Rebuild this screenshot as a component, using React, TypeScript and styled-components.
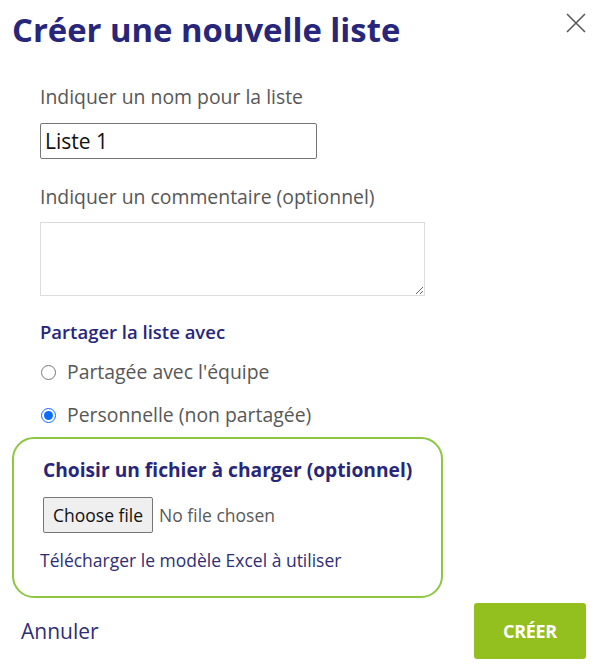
import { FC } from "react";
import styled, { createGlobalStyle } from "styled-components";

const GlobalStyle = createGlobalStyle`
  body {
    margin: 0;
    background: #ffffff;
    font-family: "Open Sans", "Noto Sans", sans-serif;
  }
`;

const navy = "#27267a";
const green = "#93c01f";

const App: FC = () => {
  return (
    <>
      <GlobalStyle />
      <Dialog>
        <Header>
          <Title>Créer une nouvelle liste</Title>
          <CloseButton aria-label="Fermer">
            <svg width="20" height="20" viewBox="0 0 20 20">
              <path
                d="M1 1 L19 19 M19 1 L1 19"
                stroke="#5a5a5a"
                strokeWidth="1.6"
                fill="none"
              />
            </svg>
          </CloseButton>
        </Header>

        <Form>
          <Label $top={36}>Indiquer un nom pour la liste</Label>
          <TextInput defaultValue="Liste 1" />

          <Label $top={26}>Indiquer un commentaire (optionnel)</Label>
          <TextArea />

          <SectionTitle>Partager la liste avec</SectionTitle>
          <RadioRow $top={16}>
            <Radio type="radio" name="share" />
            Partagée avec l'équipe
          </RadioRow>
          <RadioRow $top={19}>
            <Radio type="radio" name="share" defaultChecked />
            Personnelle (non partagée)
          </RadioRow>

          <UploadBox>
            <UploadTitle>Choisir un fichier à charger (optionnel)</UploadTitle>
            <FilePicker>
              <HiddenFile type="file" />
              <FileButton>Choose file</FileButton>
              <FileName>No file chosen</FileName>
            </FilePicker>
            <TemplateLink href="#">
              Télécharger le modèle Excel à utiliser
            </TemplateLink>
          </UploadBox>
        </Form>

        <Footer>
          <CancelLink href="#">Annuler</CancelLink>
          <CreateButton>Créer</CreateButton>
        </Footer>
      </Dialog>
    </>
  );
};

export default App;

const Dialog = styled.div`
  width: 596px;
  height: 669px;
  box-sizing: border-box;
`;

const Header = styled.div`
  display: flex;
  justify-content: space-between;
  align-items: flex-start;
  padding: 11px 10px 0 12px;
`;

const Title = styled.h1`
  margin: 0;
  font-size: 32.8px;
  line-height: 38px;
  font-weight: 700;
  color: ${navy};
`;

const CloseButton = styled.button`
  border: none;
  background: none;
  padding: 0;
  margin-top: 2px;
  width: 20px;
  height: 20px;
  display: flex;
  cursor: pointer;
`;

const Form = styled.div`
  display: flex;
  flex-direction: column;
  align-items: flex-start;
  padding-left: 40px;
`;

const Label = styled.label<{ $top: number }>`
  margin-top: ${(p) => p.$top}px;
  font-size: 19.4px;
  line-height: 24px;
  color: #575757;
`;

const TextInput = styled.input`
  margin-top: 14px;
  width: 277px;
  height: 36px;
  box-sizing: border-box;
  border: 1px solid #767676;
  border-radius: 2px;
  padding: 0 4px;
  font-family: inherit;
  font-size: 21px;
  color: #111;
`;

const TextArea = styled.textarea`
  margin-top: 13px;
  width: 385px;
  height: 74px;
  box-sizing: border-box;
  border: 1px solid #dcdcdc;
  font-family: inherit;
`;

const SectionTitle = styled.div`
  margin-top: 24px;
  font-size: 18.5px;
  line-height: 24px;
  font-weight: 600;
  color: ${navy};
`;

const RadioRow = styled.label<{ $top: number }>`
  margin-top: ${(p) => p.$top}px;
  display: flex;
  align-items: center;
  gap: 11px;
  font-size: 19.4px;
  line-height: 24px;
  color: #575757;
`;

const Radio = styled.input`
  width: 15px;
  height: 15px;
  margin: 0 0 0 1px;
  accent-color: #0b6cff;
`;

const UploadBox = styled.div`
  margin: 10px 0 0 -28px;
  width: 431px;
  height: 161px;
  box-sizing: border-box;
  border: 2px solid #8ec641;
  border-radius: 22px;
  padding: 19px 0 0 26px;
  display: flex;
  flex-direction: column;
  align-items: flex-start;
`;

const UploadTitle = styled.div`
  padding-left: 3px;
  font-size: 19.2px;
  line-height: 24px;
  font-weight: 700;
  color: ${navy};
`;

const FilePicker = styled.label`
  margin: 15px 0 0 3px;
  display: flex;
  align-items: center;
  gap: 6px;
  cursor: pointer;
`;

const HiddenFile = styled.input`
  display: none;
`;

const FileButton = styled.span`
  height: 36px;
  box-sizing: border-box;
  padding: 0 9px;
  display: flex;
  align-items: center;
  font-size: 17.5px;
  color: #111;
  background: #efefef;
  border: 1px solid #767676;
  border-radius: 2px;
`;

const FileName = styled.span`
  font-size: 17.5px;
  color: #595959;
`;

const TemplateLink = styled.a`
  margin-top: 15px;
  font-size: 17.5px;
  line-height: 24px;
  color: #2f2e74;
  text-decoration: none;
`;

const Footer = styled.div`
  display: flex;
  justify-content: space-between;
  align-items: center;
  margin-top: 5px;
  padding: 0 10px 0 21px;
`;

const CancelLink = styled.a`
  font-size: 21px;
  line-height: 28px;
  color: #2f2e74;
  text-decoration: none;
`;

const CreateButton = styled.button`
  width: 112px;
  height: 56px;
  border: none;
  border-radius: 3px;
  background: ${green};
  color: #ffffff;
  font-family: inherit;
  font-size: 18px;
  font-weight: 700;
  text-transform: uppercase;
  letter-spacing: -0.3px;
  cursor: pointer;
`;
